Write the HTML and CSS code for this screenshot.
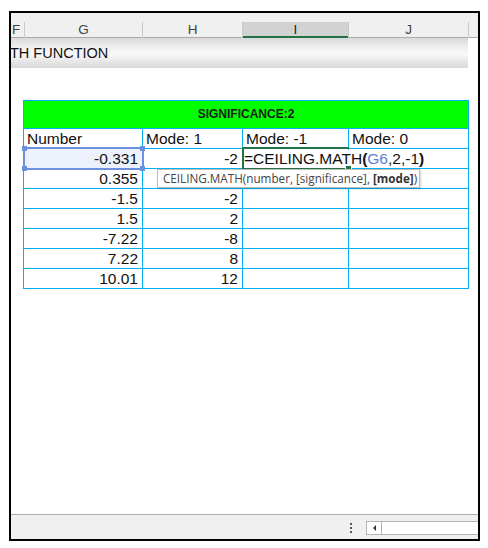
FILE: index.html
```html
<!DOCTYPE html>
<html>
<head>
<meta charset="utf-8">
<link rel="stylesheet" href="styles.css">
</head>
<body>
<div class="frame">
  <div class="colhead">
    <div class="ch">F</div>
    <div class="ch">G</div>
    <div class="ch">H</div>
    <div class="ch sel">I</div>
    <div class="ch">J</div>
    <div class="ch rest"></div>
  </div>
  <div class="titleband"><span class="titletext">TH FUNCTION</span></div>
  <div class="sheet">
    <div class="grid">
      <div class="c head">SIGNIFICANCE:2</div>
      <div class="c l">Number</div><div class="c l">Mode: 1</div><div class="c l">Mode: -1</div><div class="c l">Mode: 0</div>
      <div class="c r selcell">-0.331</div><div class="c r">-2</div><div class="c edit"><span class="formula">=CEILING.MATH<b>(</b><span class="ref">G6</span>,2,-1<b>)</b></span></div><div class="c"></div>
      <div class="c r">0.355</div><div class="c r"></div><div class="c"></div><div class="c"></div>
      <div class="c r">-1.5</div><div class="c r">-2</div><div class="c"></div><div class="c"></div>
      <div class="c r">1.5</div><div class="c r">2</div><div class="c"></div><div class="c"></div>
      <div class="c r">-7.22</div><div class="c r">-8</div><div class="c"></div><div class="c"></div>
      <div class="c r">7.22</div><div class="c r">8</div><div class="c"></div><div class="c"></div>
      <div class="c r">10.01</div><div class="c r">12</div><div class="c"></div><div class="c"></div>
      <div class="selbox"><i class="h tl"></i><i class="h tr"></i><i class="h bl"></i><i class="h br"></i></div>
      <div class="activebox"><i class="fill"></i></div>
      <div class="tip">CEILING.MATH(number, [significance], <b>[mode]</b>)</div>
    </div>
  </div>
  <div class="statusbar">
    <div class="dots"><i></i><i></i><i></i></div>
    <div class="hscroll"><div class="arrow"><i class="tri"></i></div><div class="track"></div></div>
  </div>
</div>
</body>
</html>
```
FILE: styles.css
```css
html, body { margin: 0; padding: 0; background: #fff; }
body { font-family: "Liberation Sans", Arial, sans-serif; }
.frame {
  margin: 11px 0 0 9px;
  width: 471px;
  height: 530px;
  border: 2px solid #000;
  box-sizing: border-box;
  display: flex;
  flex-direction: column;
  overflow: hidden;
}
.colhead {
  display: grid;
  grid-template-columns: 14px 118px 100px 106px 120px 1fr;
  padding-top: 9px;
  height: 25px;
  box-sizing: border-box;
  background: #f0f0f0;
  border-bottom: 1px solid #ababab;
  flex: none;
}
.ch {
  border-right: 1px solid #c9c9c9;
  box-sizing: border-box;
  height: 16px;
  line-height: 16px;
  text-align: center;
  font-size: 13.5px;
  color: #404040;
  overflow: hidden;
}
.ch:first-child { text-align: left; padding-left: 1px; }
.ch.sel { background: #d2d2d2; box-shadow: inset 0 -2px 0 #217346; color: #1e1e1e; }
.ch.rest { border-right: none; }
.titleband {
  width: 457px;
  height: 30px;
  flex: none;
  background: linear-gradient(#dadada 0%, #f4f4f4 40%, #f7f7f7 55%, #d8d8d8 100%);
  overflow: hidden;
  font-size: 14.5px;
  line-height: 30px;
  color: #111;
  white-space: nowrap;
}
.titletext { margin-left: -1px; }
.sheet { flex: 1; padding: 32px 0 0 12px; }
.grid {
  position: relative;
  display: grid;
  grid-template-columns: 118px 99px 105px 119px;
  grid-template-rows: 27px repeat(8, 19px);
  gap: 1px;
  padding: 1px;
  background: #00b0f0;
  width: max-content;
}
.c {
  background: #fff;
  font-size: 15.5px;
  line-height: 19px;
  color: #111;
  white-space: nowrap;
}
.c.l { padding-left: 3px; }
.c.r { text-align: right; padding-right: 4px; }
.c.head {
  grid-column: 1 / span 4;
  background: #00ff00;
  font-weight: bold;
  font-size: 12px;
  line-height: 27px;
  text-align: center;
  color: #1a1a1a;
}
.c.selcell { background: #edf1fb; }
.c.edit { position: relative; z-index: 1; overflow: visible; }
.formula { background: #fff; padding-left: 1px; padding-right: 1px; }
.formula .ref { color: #5b7fdc; }
.selbox {
  position: absolute;
  left: 0; top: 47px;
  width: 121px; height: 23px;
  border: 2px solid #6d8fe0;
  box-sizing: border-box;
  z-index: 2;
}
.h { position: absolute; width: 5px; height: 5px; background: #6d8fe0; }
.h.tl { left: -3px; top: -3px; }
.h.tr { right: -3px; top: -3px; }
.h.bl { left: -3px; bottom: -3px; }
.h.br { right: -3px; bottom: -3px; }
.activebox {
  position: absolute;
  left: 219px; top: 47px;
  width: 107px; height: 23px;
  border: 2px solid #217346;
  border-right: none;
  box-sizing: border-box;
  z-index: 2;
}
.fill {
  position: absolute;
  right: -3px; bottom: -4px;
  width: 5px; height: 5px;
  background: #217346;
  border: 1px solid #fff;
}
.tip {
  position: absolute;
  left: 134px; top: 69px;
  width: 263px; height: 19px;
  box-sizing: border-box;
  background: #fff;
  border: 1px solid #bdbdbd;
  box-shadow: 1px 1px 2px rgba(0,0,0,0.18);
  font-family: "Open Sans", "Noto Sans", sans-serif;
  font-size: 11.7px;
  line-height: 17px;
  padding-left: 5px;
  color: #444;
  white-space: nowrap;
  z-index: 3;
}
.tip b { font-weight: 700; color: #333; }
.statusbar {
  margin-top: auto;
  height: 25px;
  flex: none;
  box-sizing: border-box;
  border-top: 1px solid #ababab;
  background: #f0f0f0;
  display: flex;
  align-items: center;
  justify-content: flex-end;
}
.dots { display: flex; flex-direction: column; gap: 2px; margin-right: 14px; margin-top: 2px; }
.dots i { display: block; width: 2px; height: 2px; background: #555; }
.hscroll {
  width: 112px; height: 14px;
  margin-top: 2px;
  box-sizing: border-box;
  border: 1px solid #b4b4b4;
  border-right: none;
  background: #fff;
  display: flex;
}
.arrow {
  width: 15px;
  box-sizing: border-box;
  border-right: 1px solid #b4b4b4;
  display: flex; align-items: center; justify-content: center;
}
.tri {
  width: 0; height: 0;
  border-top: 3px solid transparent;
  border-bottom: 3px solid transparent;
  border-right: 3px solid #333;
}
.track { flex: 1; }
```
